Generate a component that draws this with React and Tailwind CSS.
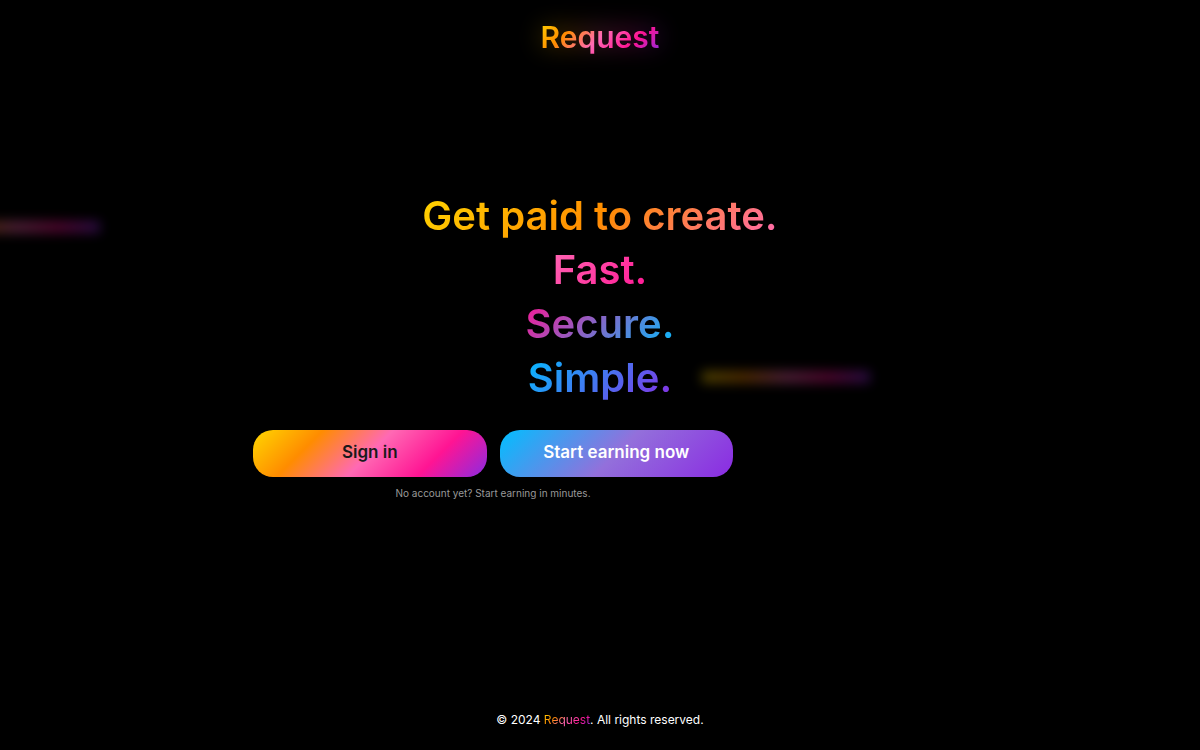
import React from "react";

const headline = [
    { text: "Get paid to create.", gradient: "bg-[linear-gradient(135deg,#ffd700,#ff8c00,#ff69b4)]" },
    { text: "Fast.", gradient: "bg-[linear-gradient(135deg,#ff69b4,#ff1493)]" },
    { text: "Secure.", gradient: "bg-[linear-gradient(135deg,#ff1493,#00bfff)]" },
    { text: "Simple.", gradient: "bg-[linear-gradient(135deg,#00bfff,#8a2be2)]" },
];

const beams = [
    { id: "left", place: "left-[-68px] top-[29.5%]" },
    { id: "right", place: "left-[58.5%] top-[49.5%]" },
];

const RAINBOW = "bg-[linear-gradient(135deg,#ffd700_0%,#ff8c00_25%,#ff69b4_50%,#ff1493_75%,#8a2be2_100%)]";
const RAINBOW_FLAT = "bg-[linear-gradient(90deg,#ffd700_0%,#ff8c00_25%,#ff69b4_50%,#ff1493_75%,#8a2be2_100%)]";

function Beams() {
    return (
        <div aria-hidden="true" className="pointer-events-none absolute inset-0 overflow-hidden">
            {beams.map((beam) => (
                <div key={beam.id} className={`absolute h-3 w-[168px] opacity-30 blur-[6px] ${RAINBOW_FLAT} ${beam.place}`} />
            ))}
        </div>
    );
}

export default function App() {
    return (
        <div className="relative flex min-h-screen flex-col bg-black font-['Inter',sans-serif] text-white">
            <Beams />

            <header className="relative flex justify-center pt-[19px] pb-1">
                <div className="relative">
                    {/* Glow behind the logo */}
                    <div aria-hidden="true" className={`absolute inset-x-0 inset-y-2 opacity-20 blur-[12px] ${RAINBOW_FLAT}`} />
                    <div className={`relative bg-clip-text text-[30px] leading-9 font-semibold text-transparent ${RAINBOW}`}>
                        Request
                    </div>
                </div>
            </header>

            <main className="relative mx-auto flex w-full max-w-[694px] flex-1 flex-col justify-center pb-[58px]">
                <h1 className="flex flex-col items-center text-[40px] leading-[54px] font-semibold">
                    {headline.map((line) => (
                        <span key={line.text} className={`bg-clip-text text-transparent ${line.gradient}`}>
                            {line.text}
                        </span>
                    ))}
                </h1>

                {/* Call to action */}
                <div className="mt-[25px] max-w-[480px]">
                    <div className="grid grid-cols-2 gap-[13px]">
                        <button type="button" className={`h-[47px] rounded-[20px] text-[17px] font-semibold text-[#1a1a1a] ${RAINBOW}`}>
                            Sign in
                        </button>
                        <button type="button" className="h-[47px] rounded-[20px] bg-[linear-gradient(135deg,#00bfff_0%,#9370db_50%,#8a2be2_100%)] text-[17px] font-semibold text-white">
                            Start earning now
                        </button>
                    </div>
                    <p className="mt-1.5 text-center text-[10px] leading-5 text-[#999999]">
                        No account yet? Start earning in minutes.
                    </p>
                </div>
            </main>

            <footer className="relative py-5 text-center text-xs leading-5">
                © 2024 <span className={`bg-clip-text text-transparent ${RAINBOW}`}>Request</span>. All rights reserved.
            </footer>
        </div>
    );
}
